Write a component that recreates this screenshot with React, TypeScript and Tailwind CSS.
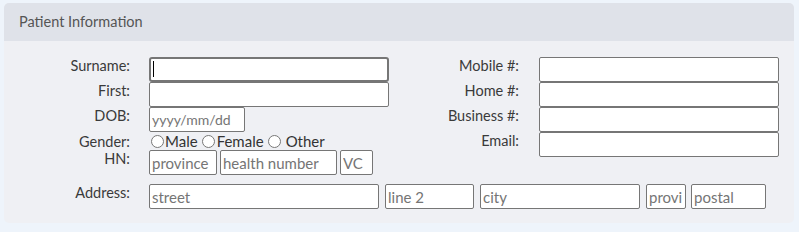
import React from 'react';

const font = { fontFamily: 'Lato, "Open Sans", sans-serif' };

const inputCls =
  'h-[25px] bg-white border border-[#767676] rounded-[2px] px-[2px] text-[#333] placeholder:text-[#757575] outline-none';

const labelCls = 'text-right text-[14.5px] leading-[18px] text-[#3a3a3a]';

function Field({ label, w = 'w-[240px]', placeholder, focused, size = 'text-[15px]' }: { label: string; w?: string; placeholder?: string; focused?: boolean; size?: string }) {
  return (
    <div className="flex items-start">
      <div className={`w-[126px] ${labelCls}`}>{label}</div>
      <div className="ml-[19px] relative">
        <input
          className={`${inputCls} ${size} ${w} ${focused ? 'border-2 border-[#101010] rounded-[3px]' : ''}`}
          placeholder={placeholder}
        />
        {focused && <span className="absolute left-[4px] top-[4px] w-px h-[16px] bg-black" />}
      </div>
    </div>
  );
}

function RightField({ label }: { label: string }) {
  return (
    <div className="flex items-start">
      <div className={`w-[119px] ${labelCls}`}>{label}</div>
      <input className={`${inputCls} text-[15px] w-[240px] ml-[20px]`} />
    </div>
  );
}

export default function App() {
  return (
    <div className="w-[799px] h-[232px] bg-[#eef4fb] pt-[3px] pl-[4px]" style={font}>
      <div className="w-[790px] h-[220px] bg-[#eff0f4] rounded-[5px]">
        {/* Header */}
        <div className="h-[38px] bg-[#dfe2e9] rounded-t-[5px] flex items-center pl-[15px] text-[14.5px] text-[#555]">
          Patient Information
        </div>

        {/* Body */}
        <div className="pt-[16px] flex">
          <div className="w-[396px] flex flex-col">
            <Field label="Surname:" focused />
            <Field label="First:" />
            <Field label="DOB:" w="w-[96px]" placeholder="yyyy/mm/dd" size="text-[14px]" />
            <div className="flex items-center h-[19px]">
              <div className={`w-[126px] ${labelCls}`}>Gender:</div>
              <div className="ml-[21px] flex items-center text-[15px] text-[#333]">
                <input type="radio" name="g" className="m-0 w-[13px] h-[13px]" />
                <span className="ml-[1px]">Male</span>
                <input type="radio" name="g" className="m-0 ml-[4px] w-[13px] h-[13px]" />
                <span className="ml-[2px]">Female</span>
                <input type="radio" name="g" className="m-0 ml-[4px] w-[13px] h-[13px]" />
                <span className="ml-[5px]">Other</span>
              </div>
            </div>
            <div className="flex items-start -mt-[1px]">
              <div className={`w-[126px] ${labelCls}`}>HN:</div>
              <div className="ml-[19px] flex gap-[3px]">
                <input className={`${inputCls} text-[15px] w-[68px]`} placeholder="province" />
                <input className={`${inputCls} text-[15px] w-[117px]`} placeholder="health number" />
                <input className={`${inputCls} text-[15px] w-[33px]`} placeholder="VC" />
              </div>
            </div>
          </div>
          <div className="flex flex-col">
            <RightField label="Mobile #:" />
            <RightField label="Home #:" />
            <RightField label="Business #:" />
            <RightField label="Email:" />
          </div>
        </div>

        {/* Address */}
        <div className="flex items-start mt-[9px]">
          <div className={`w-[126px] ${labelCls}`}>Address:</div>
          <div className="ml-[19px] flex gap-[6px]">
            <input className={`${inputCls} text-[15px] w-[230px]`} placeholder="street" />
            <input className={`${inputCls} text-[15px] w-[89px]`} placeholder="line 2" />
            <input className={`${inputCls} text-[15px] w-[160px]`} placeholder="city" />
            <input className={`${inputCls} text-[15px] w-[40px] pr-[3px]`} placeholder="provi" />
            <input className={`${inputCls} text-[15px] w-[75px] -ml-[1px]`} placeholder="postal" />
          </div>
        </div>
      </div>
    </div>
  );
}
